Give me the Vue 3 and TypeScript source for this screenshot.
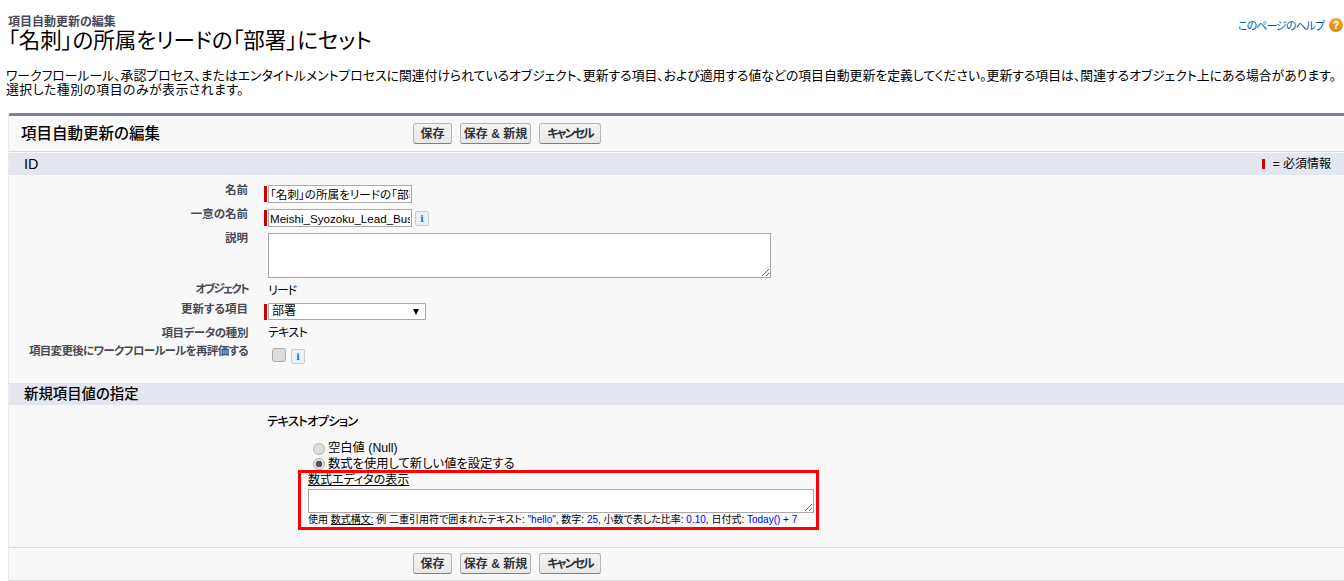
<script setup lang="ts">
const actions: { text: string; cls: string }[] = [
  { text: '保存', cls: 'b-save' },
  { text: '保存 & 新規', cls: 'b-new' },
  { text: 'キャンセル', cls: 'b-cancel' },
]
</script>

<template>
  <div class="page">
    <header class="top">
      <div class="titles">
        <div class="crumb">項目自動更新の編集</div>
        <h1>「名刺」の所属をリードの「部署」にセット</h1>
      </div>
      <a class="help">このページのヘルプ<span class="help-icon">?</span></a>
    </header>
    <p class="intro">ワークフロールール、承認プロセス、またはエンタイトルメントプロセスに関連付けられているオブジェクト、更新する項目、および適用する値などの項目自動更新を定義してください。更新する項目は、関連するオブジェクト上にある場合があります。<br /><span class="intro-2">選択した種別の項目のみが表示されます。</span></p>

    <section class="panel">
      <div class="panel-head">
        <h2>項目自動更新の編集</h2>
        <div class="btns"><button v-for="a in actions" :key="a.text" :class="a.cls">{{ a.text }}</button></div>
      </div>
      <div class="sec first"><span>ID</span><span class="legend"><i class="req-mark"></i>= 必須情報</span></div>
      <div class="form">
        <div class="row r-name"><label>名前</label><div class="val req"><input value="「名刺」の所属をリードの「部署」にセット" /></div></div>
        <div class="row r-api"><label>一意の名前</label><div class="val req"><input value="Meishi_Syozoku_Lead_Busho" /><span class="info">i</span></div></div>
        <div class="row r-desc"><label>説明</label><div class="val"><textarea class="desc"></textarea></div></div>
        <div class="row r-obj"><label>オブジェクト</label><div class="val">リード</div></div>
        <div class="row r-field"><label>更新する項目</label><div class="val req"><div class="select">部署<span class="caret"></span></div></div></div>
        <div class="row r-type"><label>項目データの種別</label><div class="val">テキスト</div></div>
        <div class="row r-check"><label>項目変更後にワークフロールールを再評価する</label><div class="val"><span class="check"></span><span class="info">i</span></div></div>
      </div>
      <div class="sec second"><span>新規項目値の指定</span></div>
      <div class="options">
        <div class="opt-title">テキストオプション</div>
        <div class="radio-row first-radio"><span class="radio"></span>空白値 (Null)</div>
        <div class="radio-row"><span class="radio on"></span>数式を使用して新しい値を設定する</div>
        <div class="formula">
          <a class="link">数式エディタの表示</a>
          <textarea class="formula-area"></textarea>
          <div class="hint">使用 <a class="link">数式構文:</a> 例 二重引用符で囲まれたテキスト: <b>"hello"</b>, 数字: <b>25</b>, 小数で表した比率: <b>0.10</b>, 日付式: <b>Today() + 7</b></div>
        </div>
      </div>
      <div class="panel-foot"><div class="btns"><button v-for="a in actions" :key="a.text" :class="a.cls">{{ a.text }}</button></div></div>
    </section>
  </div>
</template>

<style>
html, body { background: #fff; overflow: hidden; }
</style>

<style scoped>
.page { width: 1344px; height: 581px; overflow: hidden; font-family: "Liberation Sans", "Noto Sans CJK JP", sans-serif; font-feature-settings: "palt"; color: #000; font-size: 12px; }
.top { display: flex; justify-content: space-between; padding: 16px 0 0 8px; height: 55px; box-sizing: border-box; }
.crumb { font-size: 12px; line-height: 13px; font-weight: 700; color: #4a4a56; }
h1 { margin: 0; font-size: 21.5px; line-height: 24px; font-weight: 400; white-space: nowrap; }
.help { display: flex; align-items: flex-start; gap: 5px; padding-top: 2px; color: #015ba7; font-size: 11px; letter-spacing: -1px; line-height: 16px; }
.help-icon { width: 14px; height: 14px; border-radius: 50%; background: linear-gradient(#f0a62c, #dd8510); color: #fff; font: 700 11px/14px "Liberation Sans", sans-serif; letter-spacing: 0; text-align: center; margin-right: 1px; }
.intro { margin: 14px 0 0 6px; font-size: 12.85px; line-height: 14px; white-space: nowrap; height: 29px; }
.intro-2 { letter-spacing: 0.5px; }
.panel { margin: 15px 0 0 8px; background: #f8f8f8; border-top: 3px solid #7a8199; border-left: 1px solid #eaeaea; height: 468px; box-sizing: border-box; border-radius: 3px 0 0 0; }
.panel-head { display: flex; align-items: center; border-bottom: 1px solid #dbdbdb; padding: 0 0 1px 12px; box-sizing: border-box; height: 36px; }
h2 { margin: 2px 0 0; width: 392px; font-size: 15.5px; font-weight: 500; line-height: 20px; white-space: nowrap; }
.btns { display: flex; gap: 8px; }
button { height: 21px; padding: 1px 0 0; box-sizing: border-box; border: 1px solid #b5b5b5; border-bottom-color: #7f7f7f; border-radius: 3px; background: linear-gradient(#f4f4f4, #e8e8e8); color: #333; font: 700 12px/18px "Liberation Sans", "Noto Sans CJK JP", sans-serif; font-feature-settings: "palt"; white-space: nowrap; text-align: center; }
.b-save { width: 39px; }
.b-new { width: 71px; }
.b-cancel { width: 62px; letter-spacing: -2px; }
.sec { height: 22px; background: #e3e6ef; display: flex; align-items: center; justify-content: space-between; padding: 0 13px 0 15px; font-size: 14.4px; font-weight: 500; line-height: 20px; }
.sec.first { margin-top: 1px; }
.legend { display: flex; align-items: center; font-size: 12px; font-weight: 400; }
.req-mark { width: 3px; height: 10px; background: #c00; margin-right: 8px; }
.form { height: 208px; padding-top: 9px; box-sizing: border-box; }
.row { display: grid; grid-template-columns: 239px 1fr; column-gap: 20px; }
label { text-align: right; font-size: 11.5px; font-weight: 700; color: #4a4a56; line-height: 13px; white-space: nowrap; }
.val { display: flex; align-items: flex-start; gap: 3px; position: relative; font-size: 12px; line-height: 16px; }
.req::before { content: ""; position: absolute; left: -4px; top: 2px; width: 3px; height: 16px; background: #c00; }
input { width: 144px; height: 18px; box-sizing: border-box; border: 1px solid #a9a9a9; padding: 0 1px; margin: 1px 0 0; font: 11.6px/16px "Liberation Sans", "Noto Sans CJK JP", sans-serif; font-feature-settings: "palt"; background: #fff; color: #000; }
.info { width: 14px; height: 15px; margin-top: 3px; border: 1px solid #ccc; border-radius: 2px; background: #eef1f4; color: #1468c8; font: 700 9px/14px "DejaVu Serif", serif; text-align: center; box-sizing: border-box; }
textarea { display: block; box-sizing: border-box; margin: 0; border: 1px solid #a9a9a9; background: #fff; padding: 0; }
.desc { width: 503px; height: 45px; margin-top: 1px; }
.r-name { height: 24px; }
.r-api { height: 24px; }
.r-desc { height: 49px; }
.r-obj { height: 21px; }
.r-obj label { margin-top: 2px; letter-spacing: -1.7px; }
.r-obj .val { margin-top: 2px; letter-spacing: -1px; }
.r-field { height: 24px; }
.r-field label { margin-top: 1px; }
.r-type { height: 19px; }
.r-type label { margin-top: 1px; letter-spacing: -0.4px; }
.r-type .val { margin-top: -1px; letter-spacing: -0.7px; }
.r-check { height: 20px; }
.r-check label { letter-spacing: -0.7px; }
.r-check .check { margin-top: 3px; }
.r-check .info { margin-top: 4px; }
.select { width: 158px; height: 17px; margin-top: 1px; border: 1px solid #a9a9a9; background: #fff; box-sizing: border-box; padding: 0 6px 0 3px; display: flex; justify-content: space-between; align-items: center; font-size: 12px; line-height: 15px; border-radius: 1px; }
.caret { width: 0; height: 0; border-left: 3.5px solid transparent; border-right: 3.5px solid transparent; border-top: 6px solid #000; }
.check { width: 12px; height: 12px; border: 1px solid #a9a9a9; border-radius: 3px; background: #ddd; margin: 3px 2px 0 4px; }
.options { height: 142px; box-sizing: border-box; position: relative; padding: 9px 0 0 258px; }
.opt-title { font-size: 12.5px; font-weight: 500; line-height: 16px; letter-spacing: -0.9px; }
.radio-row { margin-left: 46px; display: flex; align-items: center; font-size: 12.3px; line-height: 16px; }
.first-radio { margin-top: 11px; line-height: 15px; }
.radio { width: 12px; height: 12px; border: 1px solid #b5b5b5; border-radius: 50%; background: #ddd; box-sizing: border-box; margin-right: 3px; }
.radio.on { background: radial-gradient(circle, #555 0 3px, #ddd 3.5px); }
.formula { width: 521px; height: 60px; box-sizing: border-box; margin: -2px 0 0 31px; border: 3px solid #f00; padding: 0 0 0 7px; font-size: 10px; line-height: 12px; position: relative; }
.formula > .link { display: block; font-size: 12px; line-height: 14px; height: 14px; width: max-content; }
.link { text-decoration: underline; }
.formula-area { width: 506px; height: 24px; margin-top: 2px; }
.hint { margin-top: 1px; white-space: nowrap; }
.hint b { font-weight: 400; color: #00f; }
.panel-foot { height: 34px; border-top: 1px solid #dbdbdb; border-bottom: 1px solid #dbdbdb; padding: 5px 0 0 404px; box-sizing: border-box; }
</style>
